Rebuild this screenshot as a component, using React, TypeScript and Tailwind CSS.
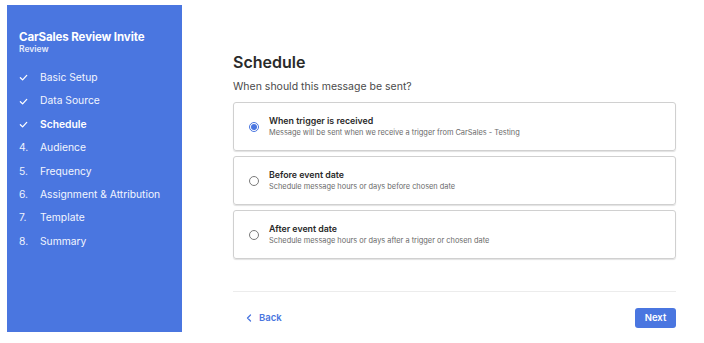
import React from "react";

const steps = [
  { mark: "check", label: "Basic Setup" },
  { mark: "check", label: "Data Source" },
  { mark: "check", label: "Schedule", active: true },
  { mark: "4.", label: "Audience" },
  { mark: "5.", label: "Frequency" },
  { mark: "6.", label: "Assignment & Attribution" },
  { mark: "7.", label: "Template" },
  { mark: "8.", label: "Summary" },
];

const options = [
  {
    title: "When trigger is received",
    desc: "Message will be sent when we receive a trigger from CarSales - Testing",
    checked: true,
  },
  {
    title: "Before event date",
    desc: "Schedule message hours or days before chosen date",
  },
  {
    title: "After event date",
    desc: "Schedule message hours or days after a trigger or chosen date",
  },
];

function Check() {
  return (
    <svg width="9" height="9" viewBox="0 0 10 10" fill="none">
      <path d="M1.5 5.2 L4 7.6 L8.6 2.6" stroke="white" strokeWidth="1.4" strokeLinecap="round" strokeLinejoin="round" />
    </svg>
  );
}

export default function App() {
  return (
    <div
      className="w-[704px] h-[343px] bg-white flex pt-[5px] pl-[7px] overflow-hidden"
      style={{ fontFamily: "Inter, 'Noto Sans', sans-serif" }}
    >
      <aside className="w-[175px] h-[327px] bg-[#4a76e0] pt-[25px] pl-[12px] text-white shrink-0">
        <div className="text-[11.5px] font-bold leading-[14px] tracking-[-0.1px]">CarSales Review Invite</div>
        <div className="text-[8.5px] font-semibold leading-[10px] text-[#e6ecfb]">Review</div>
        <ul className="mt-[12px] flex flex-col">
          {steps.map((s) => (
            <li key={s.label} className="h-[23.4px] flex items-center text-[10.3px]">
              <span className="w-[21px] flex items-center text-[10.3px] text-[#eef2fd]">
                {s.mark === "check" ? <Check /> : s.mark}
              </span>
              <span className={s.active ? "font-semibold" : "text-[#f2f5fe]"}>{s.label}</span>
            </li>
          ))}
        </ul>
      </aside>
      <main className="ml-[51px] w-[443px] flex flex-col">
        <h1 className="mt-[45px] text-[16px] font-semibold leading-[24px] text-[#2a2a2a]">Schedule</h1>
        <p className="mt-[6px] text-[10.5px] leading-[14px] text-[#4a4a4a]">When should this message be sent?</p>
        <div className="mt-[8px] flex flex-col gap-[5px]">
          {options.map((o) => (
            <div
              key={o.title}
              className="h-[49px] border border-[#d0d0d0] rounded-[3px] shadow-[0_1px_1px_rgba(0,0,0,0.12)] flex items-center pl-[15px]"
            >
              {o.checked ? (
                <span className="w-[10px] h-[10px] rounded-full border border-[#4a76e0] flex items-center justify-center">
                  <span className="w-[6px] h-[6px] rounded-full bg-[#4a76e0]" />
                </span>
              ) : (
                <span className="w-[10px] h-[10px] rounded-full border border-[#7a7a7a]" />
              )}
              <div className="ml-[10px] flex flex-col">
                <span className="text-[8.8px] font-semibold leading-[12px] text-[#2a2a2a]">{o.title}</span>
                <span className="text-[7.4px] leading-[11px] text-[#6a6a6a]">{o.desc}</span>
              </div>
            </div>
          ))}
        </div>
        <div className="mt-[32px] h-px bg-[#ececec]" />
        <div className="mt-[16px] flex items-center justify-between">
          <button className="ml-[13px] flex items-center gap-[7px] text-[#4a76e0] text-[9.5px] font-semibold">
            <svg width="6" height="8" viewBox="0 0 6 8" fill="none">
              <path d="M4.5 1 L1.5 4 L4.5 7" stroke="#4a76e0" strokeWidth="1.3" strokeLinecap="round" strokeLinejoin="round" />
            </svg>
            Back
          </button>
          <button className="w-[41px] h-[20px] rounded-[3px] bg-[#4a76e0] text-white text-[9.5px] font-semibold">
            Next
          </button>
        </div>
      </main>
    </div>
  );
}
